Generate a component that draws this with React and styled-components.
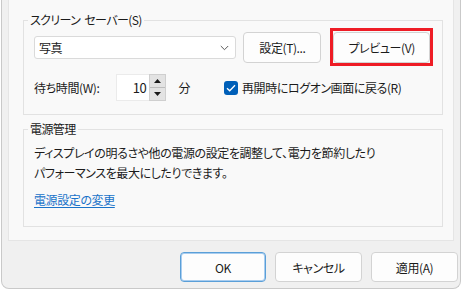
import React from "react";
import styled, { createGlobalStyle } from "styled-components";

const GlobalStyle = createGlobalStyle`
  html, body {
    margin: 0;
    background: #ffffff;
  }
  body {
    font-family: "Noto Sans CJK JP", "Noto Sans", sans-serif;
    font-size: 12px;
    letter-spacing: -0.4px;
    color: #1b1b1b;
    font-feature-settings: "palt";
  }
`;

const Window = styled("div")`
  box-sizing: border-box;
  width: 460px;
  height: 289px;
  margin-left: 1px;
  padding: 0 6px;
  background: #f0f0f0;
  border: 1px solid #c9c9c9;
  border-top: 0;
  border-radius: 0 0 8px 8px;
`;

const TabPage = styled("div")`
  box-sizing: border-box;
  height: 241px;
  padding: 0 10px 0 14px;
  background: #f9f9f9;
  border: 1px solid #e5e5e5;
  border-top: 0;
  overflow: hidden;
`;

const Group = styled("fieldset")`
  margin: ${(p) => p.$top}px 0 0 0;
  padding: 0 12px ${(p) => p.$bottom}px 10px;
  border: 1px solid #e2e2e2;
  min-width: 0;
`;

const Legend = styled("legend")`
  margin-left: -6px;
  padding: 0 2px;
  line-height: 16px;
  letter-spacing: -0.6px;
  word-spacing: 2px;
`;

const Row = styled("div")`
  display: flex;
  align-items: center;
  height: ${(p) => p.$h}px;
  margin-top: ${(p) => p.$top}px;
`;

const Combo = styled("div")`
  box-sizing: border-box;
  width: 203px;
  height: 23px;
  display: flex;
  align-items: center;
  justify-content: space-between;
  padding: 0 6px 0 4px;
  background: #ffffff;
  border: 1px solid #dadada;
  border-radius: 3px;
`;

const Button = styled("button")`
  position: relative;
  box-sizing: border-box;
  width: ${(p) => p.$w}px;
  height: ${(p) => p.$h || 31}px;
  margin-left: ${(p) => p.$ml || 0}px;
  padding: 0;
  font-family: inherit;
  font-size: 12px;
  letter-spacing: -0.4px;
  font-feature-settings: "palt";
  color: #1b1b1b;
  background: #fdfdfd;
  border: 1px solid ${(p) => (p.$primary ? "#5a9fd8" : "#d3d3d3")};
  box-shadow: ${(p) => (p.$primary ? "inset 0 0 0 1px #a9cdef" : "none")};
  border-radius: 4px;
`;

const Highlight = styled("span")`
  position: absolute;
  inset: -5px -4px -4px -4px;
  border: 3px solid #ee1c25;
  pointer-events: none;
`;

const Label = styled("span")`
  margin-left: ${(p) => p.$ml || 0}px;
  white-space: nowrap;
`;

const SpinInput = styled("div")`
  display: flex;
  height: 27px;
  margin-left: 17px;
`;

const SpinField = styled("div")`
  box-sizing: border-box;
  width: 33px;
  height: 27px;
  padding-right: 3px;
  display: flex;
  align-items: center;
  justify-content: flex-end;
  font-size: 13px;
  background: #ffffff;
  border: 1px solid #ebebeb;
  border-right: 0;
`;

const SpinButtons = styled("div")`
  display: flex;
  flex-direction: column;
  width: 17px;
  height: 27px;
  background: #e3e3e3;
  border: 1px solid #cfcfcf;
  box-sizing: border-box;
`;

const SpinArrow = styled("div")`
  flex: 1;
  display: flex;
  align-items: center;
  justify-content: center;
  border-top: ${(p) => (p.$down ? "1px solid #bdbdbd" : "0")};
`;

const Checkbox = styled("span")`
  display: inline-flex;
  align-items: center;
  justify-content: center;
  width: 14px;
  height: 14px;
  margin-left: 34px;
  background: #005fb8;
  border-radius: 3px;
`;

const Description = styled("p")`
  margin: 6px 0 0 0;
  line-height: 20px;
`;

const Link = styled("a")`
  display: block;
  margin-top: 7px;
  line-height: 20px;
  color: #1a73c9;
  text-decoration: underline;
  text-underline-offset: 2px;
`;

const Footer = styled("div")`
  display: flex;
  justify-content: flex-end;
  gap: 9px;
  margin-top: 11px;
  margin-right: -4px;
`;

const Chevron = () => (
  <svg width="9" height="6" viewBox="0 0 9 6">
    <path d="M0.8 1 L4.5 4.7 L8.2 1" fill="none" stroke="#5a5a5a" strokeWidth="1" />
  </svg>
);

const Triangle = ({ down }) => (
  <svg width="7" height="4" viewBox="0 0 7 4">
    <path d={down ? "M0 0 H7 L3.5 4 Z" : "M0 4 H7 L3.5 0 Z"} fill="#1b1b1b" />
  </svg>
);

const Check = () => (
  <svg width="10" height="8" viewBox="0 0 10 8">
    <path d="M1 4.2 L3.7 6.8 L9 1.2" fill="none" stroke="#ffffff" strokeWidth="1.3" />
  </svg>
);

export default function App() {
  return (
    <>
      <GlobalStyle />
      <Window>
        <TabPage>
          <Group $top={12} $bottom={13}>
            <Legend>スクリーン セーバー(S)</Legend>
            <Row $h={31} $top={4}>
              <Combo>
                <span>写真</span>
                <Chevron />
              </Combo>
              <Button $w={78} $ml={7}>設定(T)...</Button>
              <Button $w={97} $ml={12}>
                プレビュー(V)
                <Highlight />
              </Button>
            </Row>
            <Row $h={27} $top={11}>
              <Label>待ち時間(W):</Label>
              <SpinInput>
                <SpinField>10</SpinField>
                <SpinButtons>
                  <SpinArrow>
                    <Triangle />
                  </SpinArrow>
                  <SpinArrow $down>
                    <Triangle down />
                  </SpinArrow>
                </SpinButtons>
              </SpinInput>
              <Label $ml={12}>分</Label>
              <Checkbox>
                <Check />
              </Checkbox>
              <Label $ml={4}>再開時にログオン画面に戻る(R)</Label>
            </Row>
          </Group>
          <Group $top={6} $bottom={16}>
            <Legend>電源管理</Legend>
            <Description>
              ディスプレイの明るさや他の電源の設定を調整して、電力を節約したり
              <br />
              パフォーマンスを最大にしたりできます。
            </Description>
            <Link href="#">電源設定の変更</Link>
          </Group>
        </TabPage>
        <Footer>
          <Button $w={86} $h={30} $primary>OK</Button>
          <Button $w={87} $h={30}>キャンセル</Button>
          <Button $w={87} $h={30}>適用(A)</Button>
        </Footer>
      </Window>
    </>
  );
}
